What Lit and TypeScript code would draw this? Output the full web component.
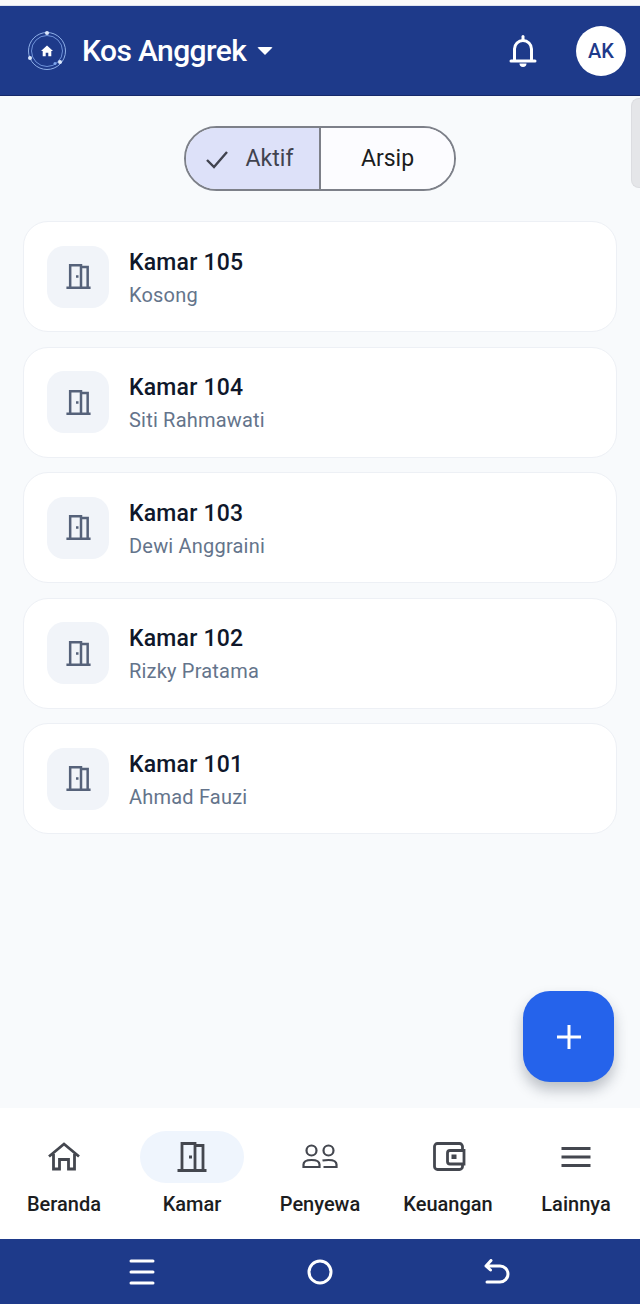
import { LitElement, html, css, svg } from "lit";
import { customElement } from "lit/decorators.js";

const doorIcon = (size: number, sw: number) => html`
  <svg width=${size} height=${size} viewBox="0 0 30 30" fill="none" stroke="currentColor" stroke-width=${sw}>
    ${svg`<path d="M0.500 28.500h29M5 28.500V1.500h13v27M18 3.500h8v25" />
    <rect x="12" y="13.500" width="3" height="3" fill="currentColor" stroke="none" />`}
  </svg>
`;

const navItems = [
  {
    label: "Beranda",
    icon: svg`<path d="M3 14.500 18 2l15 12.500M7.500 12v15h6V17.500h9V27h6V12" />`,
  },
  { label: "Kamar", active: true, icon: null },
  {
    label: "Penyewa",
    thin: true,
    icon: svg`<circle cx="9.500" cy="8.500" r="5" /><circle cx="26.500" cy="8.500" r="5" />
      <path d="M1.500 25v-2.500c0-3 3-4.500 8-4.500s8 1.500 8 4.500V25zM20.500 18.500c1.800-.4 3.800-.5 6-.5 5 0 8 1.500 8 4.500V25h-13" />`,
  },
  {
    label: "Keuangan",
    icon: svg`<path d="M32.500 8V4.500a3 3 0 0 0-3-3h-22a3 3 0 0 0-3 3v20a3 3 0 0 0 3 3h22a3 3 0 0 0 3-3V22" />
      <path d="M34 8.500H20a2.500 2.500 0 0 0-2.500 2.500v8.500a2.500 2.500 0 0 0 2.500 2.500H34z" />
      <rect x="21.500" y="12.500" width="5" height="4.500" fill="currentColor" stroke="none" />`,
  },
  { label: "Lainnya", icon: svg`<path d="M3.500 6.500h29M3.500 15h29M3.500 23.500h29" />` },
];

const rooms = [
  { name: "Kamar 105", tenant: "Kosong" },
  { name: "Kamar 104", tenant: "Siti Rahmawati" },
  { name: "Kamar 103", tenant: "Dewi Anggraini" },
  { name: "Kamar 102", tenant: "Rizky Pratama" },
  { name: "Kamar 101", tenant: "Ahmad Fauzi" },
];

@customElement("app-root")
export class AppRoot extends LitElement {
  static styles = css`
    :host {
      display: flex;
      flex-direction: column;
      height: 1304px;
      position: relative;
      overflow: hidden;
      background: #f8fafc;
      font-family: Roboto, "Liberation Sans", sans-serif;
    }
    .status {
      height: 6px;
      background: #f9f9f9;
      border-bottom: 1px solid #dfe3ee;
      box-sizing: border-box;
    }
    .header {
      height: 90px;
      flex: none;
      box-sizing: border-box;
      background: #1e3a8a;
      border-bottom: 1px solid #16296a;
      display: flex;
      align-items: center;
      padding: 0 14px 0 27px;
      color: #fff;
    }
    .logo {
      display: block;
      margin-right: 15px;
    }
    .title {
      font-size: 30px;
      font-weight: 500;
      letter-spacing: -0.6px;
    }
    .caret {
      width: 0;
      height: 0;
      margin-left: 11px;
      margin-top: 1px;
      border-left: 8px solid transparent;
      border-right: 8px solid transparent;
      border-top: 8px solid #fff;
      border-radius: 2px;
    }
    .bell {
      margin-left: auto;
      margin-right: 39px;
      display: block;
    }
    .avatar {
      width: 50px;
      height: 50px;
      border-radius: 50%;
      background: #fff;
      color: #1e3a8a;
      display: flex;
      align-items: center;
      justify-content: center;
      font-size: 20px;
      font-weight: 500;
    }
    .content {
      flex: 1;
      position: relative;
      padding: 30px 23px 0;
    }
    .handle {
      position: absolute;
      right: 0;
      top: 2px;
      width: 9px;
      height: 90px;
      background: #e5e6e9;
      border: 1px solid #dcdde1;
      border-right: 0;
      border-radius: 8px 0 0 8px;
      box-sizing: border-box;
    }
    .segment {
      display: flex;
      width: 272px;
      height: 65px;
      margin: 0 auto 30px;
      box-sizing: border-box;
      border: 2px solid #7d8089;
      border-radius: 33px;
      overflow: hidden;
      font-size: 23px;
      color: #1b1c20;
    }
    .segment > div {
      display: flex;
      align-items: center;
      justify-content: center;
      box-sizing: border-box;
    }
    .segment .on {
      flex: none;
      width: 135px;
      background: #dde1f9;
      border-right: 2px solid #7d8089;
      color: #41434f;
      gap: 17px;
      padding-right: 7px;
    }
    .segment .off {
      flex: 1;
      background: #fcfcff;
    }
    .list {
      display: flex;
      flex-direction: column;
      gap: 14.5px;
    }
    .card {
      height: 111px;
      box-sizing: border-box;
      background: #fff;
      border: 1.5px solid #edf0f5;
      border-radius: 25px;
      display: flex;
      align-items: center;
      padding: 0 0 0 23px;
      gap: 20px;
    }
    .tile {
      width: 62px;
      height: 62px;
      border-radius: 17px;
      background: #f1f4f9;
      color: #56627a;
      display: flex;
      align-items: center;
      justify-content: center;
    }
    .text {
      padding-top: 2px;
    }
    .name {
      font-size: 23px;
      font-weight: 500;
      line-height: 30px;
      letter-spacing: 0.2px;
      color: #0f172a;
      margin-bottom: 4px;
    }
    .tenant {
      font-size: 20px;
      line-height: 26px;
      color: #64748b;
      letter-spacing: 0.2px;
    }
    .fab {
      position: absolute;
      left: 523px;
      top: 991px;
      width: 91px;
      height: 91px;
      border-radius: 27px;
      background: #2563eb;
      box-shadow: 0 8px 14px rgba(30, 41, 59, 0.28);
      display: flex;
      align-items: center;
      justify-content: center;
    }
    .nav {
      height: 131px;
      flex: none;
      background: #fff;
      display: flex;
      box-sizing: border-box;
    }
    .nav-item {
      flex: 1;
      min-width: 0;
      display: flex;
      flex-direction: column;
      align-items: center;
      padding-top: 23px;
      color: #44474f;
    }
    .pill {
      width: 104px;
      height: 52px;
      border-radius: 26px;
      display: flex;
      align-items: center;
      justify-content: center;
    }
    .pill.active {
      background: #eff5fd;
    }
    .label {
      margin-top: 7px;
      font-size: 20px;
      line-height: 28px;
      font-weight: 500;
      color: #1c1d21;
      white-space: nowrap;
    }
    .sys {
      height: 65px;
      flex: none;
      background: #1e3a8a;
      display: flex;
      align-items: center;
      justify-content: space-between;
      padding: 0 130px 0 129px;
      color: #fff;
    }
  `;

  render() {
    return html`
      <div class="status"></div>
      <div class="header">
        <svg class="logo" width="40" height="40" viewBox="0 0 40 40" fill="none">
          <circle cx="20" cy="20" r="18.500" stroke="#8fb0e8" stroke-width="1" />
          <circle cx="20" cy="20" r="15.500" stroke="#6f93da" stroke-width="1" />
          <circle cx="20" cy="2" r="2" fill="#dbe7fb" />
          <circle cx="3" cy="27" r="2" fill="#dbe7fb" />
          <circle cx="33" cy="31" r="2" fill="#dbe7fb" />
          <circle cx="28" cy="32.500" r="1.500" fill="#7ea6ee" />
          <path d="M20 14.500l6 5.500h-1.700v5.200h-3v-3.500h-2.600v3.500h-3V20H14z" fill="#fff" />
        </svg>
        <span class="title">Kos Anggrek</span>
        <span class="caret"></span>
        <svg class="bell" width="28" height="34" viewBox="0 0 28 34" fill="none" stroke="#fff" stroke-width="3">
          <path d="M2 27h24M5.500 26V15a8.500 8.500 0 0 1 17 0v11" stroke-linecap="round" />
          <path d="M14 2.500v3" stroke-linecap="round" />
          <path d="M10.500 29.500h7a3.500 3.500 0 0 1-7 0z" fill="#fff" stroke="none" />
        </svg>
        <div class="avatar">AK</div>
      </div>
      <div class="content">
        <div class="handle"></div>
        <div class="segment">
          <div class="on">
            <svg width="24" height="20" viewBox="0 0 24 20" fill="none" stroke="currentColor" stroke-width="2.400">
              <path d="M2 11l7 7L22 3" />
            </svg>
            Aktif
          </div>
          <div class="off">Arsip</div>
        </div>
        <div class="list">
          ${rooms.map(
            (r) => html`
              <div class="card">
                <div class="tile">${doorIcon(25, 3)}</div>
                <div class="text">
                  <div class="name">${r.name}</div>
                  <div class="tenant">${r.tenant}</div>
                </div>
              </div>
            `,
          )}
        </div>
      </div>
      <div class="fab">
        <svg width="26" height="26" viewBox="0 0 26 26" stroke="#fff" stroke-width="3">
          <path d="M13 1v24M1 13h24" />
        </svg>
      </div>
      <div class="nav">
        ${navItems.map(
          (n) => html`
            <div class="nav-item">
              <div class="pill ${n.active ? "active" : ""}">
                ${n.icon
                  ? html`<svg width="36" height="30" viewBox="0 0 36 30" fill="none" stroke="currentColor" stroke-width=${n.thin ? 2.2 : 2.8}>${n.icon}</svg>`
                  : doorIcon(30, 2.8)}
              </div>
              <div class="label">${n.label}</div>
            </div>
          `,
        )}
      </div>
      <div class="sys">
        <svg width="26" height="26" viewBox="0 0 26 26" stroke="#fff" stroke-width="3" stroke-linecap="round">
          <path d="M2 2h22M2 13h22M2 24h22" />
        </svg>
        <svg width="26" height="26" viewBox="0 0 26 26" fill="none" stroke="#fff" stroke-width="3">
          <circle cx="13" cy="13" r="11" />
        </svg>
        <svg width="26" height="26" viewBox="0 0 26 26" fill="none" stroke="#fff" stroke-width="3" stroke-linecap="round" stroke-linejoin="round">
          <path d="M7 1.500 2 7l4.500 4M2 7h14a8 8 0 0 1 0 16H3" />
        </svg>
      </div>
    `;
  }
}
